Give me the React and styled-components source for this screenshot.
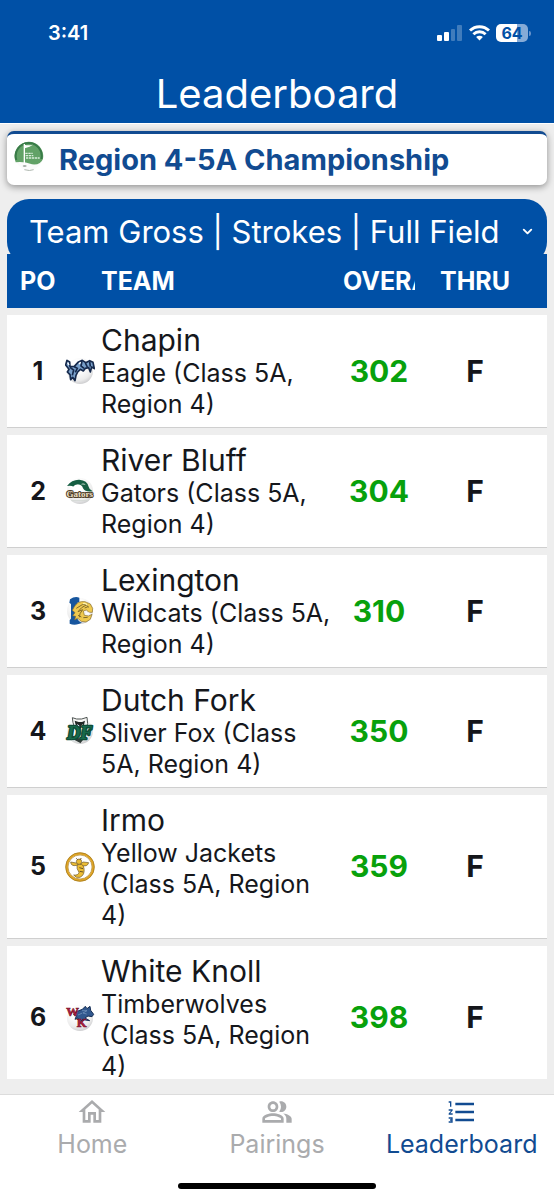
import React from "react";
import styled, { createGlobalStyle } from "styled-components";
import { MdOutlineHome, MdOutlinePeopleAlt, MdFormatListNumbered } from "react-icons/md";
import { FiChevronDown } from "react-icons/fi";

const BLUE = "#0050a6";
const PAGE = "#eeeeee";

const GlobalStyle = createGlobalStyle`
  *, *::before, *::after { box-sizing: border-box; }
  body {
    margin: 0;
    background: ${PAGE};
    color: #15171c;
    font-family: Inter, "Liberation Sans", sans-serif;
  }
`;

const Screen = styled.div`
  display: flex;
  flex-direction: column;
  height: 100vh;
`;

const TopBar = styled.header`
  flex: none;
  background: ${BLUE};
  color: #fff;
  border-bottom: 1px solid #fff;
`;

const StatusBar = styled.div`
  display: flex;
  align-items: center;
  justify-content: space-between;
  padding: 20px 24px 0 48px;
  height: 46px;
`;

const Clock = styled.time`
  font-size: 20px;
  font-weight: 600;
  line-height: 26px;
`;

const StatusIcons = styled.div`
  display: flex;
  align-items: center;
  gap: 6px;
`;

const Battery = styled.div`
  position: relative;
  width: 32px;
  height: 18px;
  margin-right: 2px;
  border-radius: 5px;
  background: linear-gradient(to right, #fff 66%, #86abd7 66%);
  color: ${BLUE};
  font-size: 16px;
  font-weight: 700;
  line-height: 18px;
  text-align: center;

  &::after {
    content: "";
    position: absolute;
    right: -3px;
    top: 7px;
    width: 2px;
    height: 5px;
    border-radius: 0 2px 2px 0;
    background: #6793cb;
  }
`;

const Title = styled.h1`
  margin: 0;
  padding: 24px 0 5px;
  font-size: 40px;
  font-weight: 400;
  line-height: 48px;
  text-align: center;
`;

const Content = styled.main`
  flex: 1;
  min-height: 0;
  display: flex;
  flex-direction: column;
  padding: 7px 7px 15px;
`;

const EventCard = styled.section`
  flex: none;
  display: flex;
  align-items: center;
  gap: 15px;
  height: 54px;
  padding: 0 7px;
  border-top: 3px solid #114b91;
  border-radius: 7px;
  background: #fff;
  box-shadow: 0 2px 7px rgba(0, 0, 0, 0.4);

  svg { margin-bottom: 8px; }
`;

const EventName = styled.h2`
  margin: 0;
  color: #114b91;
  font-size: 29px;
  font-weight: 700;
  line-height: 36px;
`;

const Picker = styled.div`
  flex: none;
  display: grid;
  align-items: center;
  margin-top: 14px;
  margin-bottom: -10px;
  border-radius: 22px;
  background: ${BLUE};
  color: #fff;

  > * { grid-area: 1 / 1; }
  svg { justify-self: end; margin-right: 12px; pointer-events: none; }
`;

const PickerSelect = styled.select`
  appearance: none;
  width: 100%;
  height: 65px;
  padding: 0 36px 0 22px;
  border: 0;
  border-radius: 22px;
  background: transparent;
  color: inherit;
  font-family: inherit;
  font-size: 31px;
  line-height: 40px;
`;

const Scroller = styled.div`
  position: relative;
  flex: 1;
  min-height: 0;
  overflow-y: auto;
  scrollbar-width: none;
`;

const Table = styled.table`
  width: 100%;
  table-layout: fixed;
  border-collapse: separate;
  border-spacing: 0;
`;

const Column = styled.col`
  width: ${(p) => p.$width};
`;

const HeadCell = styled.th`
  height: 54px;
  padding: 0 ${(p) => p.$right || "0"} 0 ${(p) => p.$left || "0"};
  background: ${BLUE};
  color: #fff;
  font-size: 25px;
  font-weight: 700;
  line-height: 32px;
  text-align: ${(p) => p.$align || "left"};
`;

const HeadLabel = styled.div`
  overflow: hidden;
  white-space: nowrap;
`;

const Cell = styled.td`
  padding: 7px ${(p) => p.$right || "0"} 7px ${(p) => p.$left || "0"};
  border-top: 7px solid ${PAGE};
  border-bottom: 1px solid #cfcfcf;
  background: #fff;
  font-size: ${(p) => p.$size || "25px"};
  font-weight: 700;
  line-height: 31px;
  color: ${(p) => p.$color || "inherit"};
  text-align: ${(p) => p.$align || "center"};
  vertical-align: middle;

  svg { display: block; }
`;

const TeamName = styled.div`
  font-size: 30px;
  font-weight: 400;
  line-height: 36px;
`;

const TeamDetail = styled.div`
  font-size: 25px;
  font-weight: 400;
  line-height: 31px;
`;

const TabBar = styled.nav`
  flex: none;
  display: grid;
  grid-template-columns: repeat(3, 1fr);
  padding-top: 1px;
  border-top: 1px solid #dcdcdc;
  background: #fff;
`;

const Tab = styled.a`
  display: flex;
  flex-direction: column;
  align-items: center;
  color: ${(p) => (p.$active ? "#114b91" : "#aaabad")};
  font-size: 25px;
  font-weight: 400;
  line-height: 32px;
  text-decoration: none;
`;

const HomeIndicator = styled.div`
  flex: none;
  display: flex;
  justify-content: center;
  padding: 23px 0 11px;
  background: #fff;

  &::after {
    content: "";
    width: 198px;
    height: 6px;
    border-radius: 3px;
    background: #000;
  }
`;

const SignalIcon = () => (
  <svg width="26" height="16" viewBox="0 0 26 16" fill="#fff" aria-hidden="true">
    <rect x="0" y="10" width="5" height="6" rx="1" />
    <rect x="7" y="7" width="5" height="9" rx="1" />
    <rect x="14" y="4" width="4" height="12" rx="1" opacity=".25" />
    <rect x="20" y="0" width="5" height="16" rx="1" opacity=".25" />
  </svg>
);

const WifiIcon = () => (
  <svg width="21" height="16" viewBox="0 0 21 16" fill="none" stroke="#fff" strokeWidth="2.9" aria-hidden="true">
    <path d="M1 5.5C6.3.4 14.7.4 20 5.5" />
    <path d="M4.4 9.2c3.4-3.2 8.8-3.2 12.2 0" />
    <path d="M7.1 11.9c1.9-1.7 4.9-1.7 6.8 0L10.5 15.5z" fill="#fff" stroke="none" />
  </svg>
);

const EventLogo = () => (
  <svg width="30" height="30" viewBox="0 0 90 90" aria-hidden="true">
    <circle cx="45" cy="45" r="42" fill="#fbfbfb" />
    <path d="M3 56A43 43 0 1 1 87 53Q80 73 54 70Q27 60 5 64z" fill="#62a267" />
    <path d="M7 57A39 39 0 1 1 82 54" fill="none" stroke="#397b48" strokeWidth="6" />
    <path d="M31 9v66" stroke="#fff" strokeWidth="4" />
    <path d="M31 11q12 4 26 0-8 6-25 11z" fill="#fff" />
    <path d="M34 37h22M35 44h23M36 51h41" stroke="#d9eddb" strokeWidth="4" strokeDasharray="7 2" />
    <ellipse cx="32" cy="75" rx="6" ry="2" fill="#87938a" />
    <path d="M31 86q16 5 28 0" stroke="#afb8b0" strokeWidth="3" fill="none" />
  </svg>
);

const Ball = () => (
  <>
    <defs>
      <radialGradient id="ball" cx=".42" cy=".3" r=".7">
        <stop offset=".3" stopColor="#fff" />
        <stop offset=".8" stopColor="#ececec" />
        <stop offset="1" stopColor="#d0d0d2" />
      </radialGradient>
    </defs>
    <circle cx="45" cy="45" r="39" fill="url(#ball)" />
  </>
);

const logos = {
  chapin: (
    <>
      <Ball />
      <path d="M6 13L14 18 15 32 28 31 39 19 52 13 62 20 74 14 84 19 88 38 80 33 76 48 71 35 61 37 55 45 46 40 38 48 33 58 30 74 23 64 17 71 15 56 7 48 12 40 2 27z" fill="#79a0cb" stroke="#16294c" strokeWidth="5" strokeLinejoin="round" />
      <path d="M15 34L26 42 22 58M28 32L37 37 31 49M51 15L48 30 57 37M61 21L67 33M74 17L76 32" fill="none" stroke="#16294c" strokeWidth="5" />
      <path d="M8 20L12 27M42 24L47 19" stroke="#fff" strokeWidth="4" />
    </>
  ),
  gators: (
    <>
      <Ball />
      <path d="M6 30Q21 10 43 11 67 13 71 32 72 40 83 46 61 49 54 37 50 24 37 26L26 32Q18 27 6 30z" fill="#155e42" />
      <path d="M24 32Q34 22 43 28L49 39Q35 33 24 32z" fill="#fff" />
      <path d="M47 25q8-6 15 1-8-1-15-1z" fill="#cfe3d5" />
      <text x="44" y="64" textAnchor="middle" fontFamily="Liberation Serif, serif" fontWeight="700" fontSize="27" fill="#eadfc4" stroke="#51412c" strokeWidth="6" strokeLinejoin="round" paintOrder="stroke">Gators</text>
      <path d="M19 74h51" stroke="#d4d8d5" strokeWidth="3" />
    </>
  ),
  wildcats: (
    <>
      <Ball />
      <path d="M15 10q14-10 28-5v13l-7 3v44q4 12 15 15l-10 4q-14 5-27-1V72l4-4V24l-5-4z" fill="#17569e" />
      <path d="M27 34q10-20 33-17l16 7 7 13-1 12-10 0-8-7-9 3 3 13 13 2 10-5-5 15-13 8-14-2-11-9-9 4 3-10-9-2 7-9-8-7z" fill="#efc94f" stroke="#8a6d29" strokeWidth="2" />
      <path d="M34 37l18-11 15-1-17 10-11 12 14-6-8 12-2 11M64 28l8 6M59 36l10-4M39 58l10 5M55 65l13-1" fill="none" stroke="#806a2b" strokeWidth="3" />
      <path d="M63 47l5 4 5-3v7l-9 1z" fill="#fff" />
      <path d="M54 23q8-2 13 4" fill="none" stroke="#fff2a9" strokeWidth="4" />
    </>
  ),
  foxes: (
    <>
      <Ball />
      <path d="M22 5L35 9H50L66 4 68 23 62 39 46 55 31 40 24 20z" fill="#f5f5f3" stroke="#4f5553" strokeWidth="3" />
      <path d="M29 14L41 18H51L60 14 57 26 50 31 45 43 40 31 32 27z" fill="#222826" />
      <path d="M37 26l6 4M54 26l-6 4" stroke="#fff" strokeWidth="3" />
      <path d="M8 60L46 82 54 72 20 58z" fill="#303b37" />
      <text x="44" y="68" textAnchor="middle" fontFamily="Liberation Serif, serif" fontWeight="700" fontStyle="italic" fontSize="54" fill="#176a4c" stroke="#0f4d37" strokeWidth="8" strokeLinejoin="round" paintOrder="stroke">DF</text>
      <path d="M20 73l24 8" stroke="#d8dedb" strokeWidth="2" />
    </>
  ),
  jackets: (
    <>
      <circle cx="45" cy="45" r="40" fill="#fff" stroke="#e0a525" strokeWidth="7" />
      <circle cx="45" cy="45" r="43" fill="none" stroke="#9a721b" strokeWidth="2" />
      <circle cx="45" cy="45" r="36" fill="none" stroke="#ad8021" strokeWidth="2" />
      <g fill="#ecbd35" stroke="#6b5424" strokeWidth="2">
        <path d="M35 40Q18 44 17 30l17 3 8 8zM49 40q18 6 22-8l-17-2-9 9z" />
        <path d="M36 39Q54 31 57 49 60 69 45 76 33 79 26 69 40 71 42 61 34 50 36 39z" />
        <circle cx="42" cy="29" r="8" />
      </g>
      <path d="M43 47l11 3M44 58l11 2M38 23l-4-4M45 23l4-5" stroke="#6b5424" strokeWidth="3" />
    </>
  ),
  wolves: (
    <>
      <Ball />
      <path d="M34 26L52 19 61 10 66 17 75 10 77 22 86 34 81 41 69 39 60 45 74 53 55 50 44 56 39 45 30 49 35 37 26 35z" fill="#31588e" stroke="#172f56" strokeWidth="3" />
      <path d="M51 23l15 0-12 7 11 3M39 36l13-6" fill="none" stroke="#7d9dc4" strokeWidth="2" />
      <g fontFamily="Liberation Serif, serif" fontWeight="700" fontSize="38" fill="#b71d3e" stroke="#7b1730" strokeWidth="2">
        <text x="4" y="39">W</text>
        <text x="35" y="73">K</text>
      </g>
    </>
  ),
};

const TeamLogo = ({ name }) => (
  <svg width="30" height="30" viewBox="0 0 90 90" aria-hidden="true">
    {logos[name]}
  </svg>
);

const teams = [
  { pos: 1, logo: "chapin", name: "Chapin", detail: "Eagle (Class 5A, Region 4)", overall: 302, thru: "F" },
  { pos: 2, logo: "gators", name: "River Bluff", detail: "Gators (Class 5A, Region 4)", overall: 304, thru: "F" },
  { pos: 3, logo: "wildcats", name: "Lexington", detail: "Wildcats (Class 5A, Region 4)", overall: 310, thru: "F" },
  { pos: 4, logo: "foxes", name: "Dutch Fork", detail: "Sliver Fox (Class 5A, Region 4)", overall: 350, thru: "F" },
  { pos: 5, logo: "jackets", name: "Irmo", detail: "Yellow Jackets (Class 5A, Region 4)", overall: 359, thru: "F" },
  { pos: 6, logo: "wolves", name: "White Knoll", detail: "Timberwolves (Class 5A, Region 4)", overall: 398, thru: "F" },
];

export default function App() {
  return (
    <Screen>
      <GlobalStyle />
      <TopBar>
        <StatusBar>
          <Clock>3:41</Clock>
          <StatusIcons>
            <SignalIcon />
            <WifiIcon />
            <Battery>64</Battery>
          </StatusIcons>
        </StatusBar>
        <Title>Leaderboard</Title>
      </TopBar>

      <Content>
        <EventCard>
          <EventLogo />
          <EventName>Region 4-5A Championship</EventName>
        </EventCard>

        <Picker>
          <PickerSelect aria-label="Leaderboard view" defaultValue="gross">
            <option value="gross">Team Gross | Strokes | Full Field</option>
          </PickerSelect>
          <FiChevronDown size={15} strokeWidth={3} aria-hidden="true" />
        </Picker>

        <Scroller>
          <Table>
            <colgroup>
              <Column $width="58px" />
              <Column $width="36px" />
              <Column $width="auto" />
              <Column $width="78px" />
              <Column $width="129px" />
            </colgroup>
            <thead>
              <tr>
                <HeadCell scope="col" $left="13px" $right="9px"><HeadLabel>POS</HeadLabel></HeadCell>
                <HeadCell as="td" />
                <HeadCell scope="col"><HeadLabel>TEAM</HeadLabel></HeadCell>
                <HeadCell scope="col" $left="3px" $right="3px"><HeadLabel>OVERALL</HeadLabel></HeadCell>
                <HeadCell scope="col" $right="15px" $align="center"><HeadLabel>THRU</HeadLabel></HeadCell>
              </tr>
            </thead>
            <tbody>
              {teams.map((t) => (
                <tr key={t.pos}>
                  <Cell $left="4px">{t.pos}</Cell>
                  <Cell $align="left"><TeamLogo name={t.logo} /></Cell>
                  <Cell $align="left" $right="4px">
                    <TeamName>{t.name}</TeamName>
                    <TeamDetail>{t.detail}</TeamDetail>
                  </Cell>
                  <Cell $size="30px" $color="#08a10c">{t.overall}</Cell>
                  <Cell $size="30px" $right="15px">{t.thru}</Cell>
                </tr>
              ))}
            </tbody>
          </Table>
        </Scroller>
      </Content>

      <TabBar>
        <Tab href="#home"><MdOutlineHome size={32} />Home</Tab>
        <Tab href="#pairings"><MdOutlinePeopleAlt size={32} />Pairings</Tab>
        <Tab href="#leaderboard" $active aria-current="page"><MdFormatListNumbered size={32} />Leaderboard</Tab>
      </TabBar>
      <HomeIndicator />
    </Screen>
  );
}
